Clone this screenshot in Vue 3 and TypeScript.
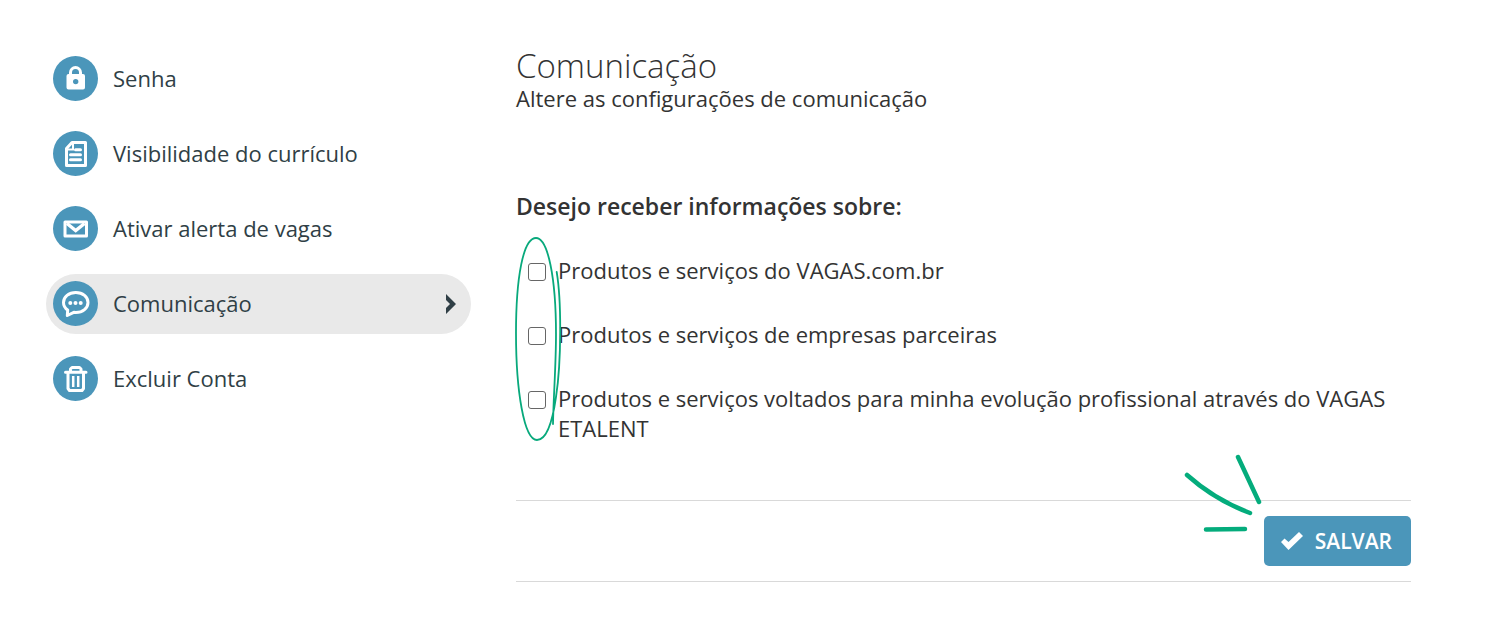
<script setup lang="ts">
import { ref } from 'vue'

interface MenuItem {
  id: string
  label: string
}

interface Option {
  id: string
  label: string
  checked: boolean
}

const menu: MenuItem[] = [
  { id: 'senha', label: 'Senha' },
  { id: 'visibilidade', label: 'Visibilidade do currículo' },
  { id: 'alerta', label: 'Ativar alerta de vagas' },
  { id: 'comunicacao', label: 'Comunicação' },
  { id: 'excluir', label: 'Excluir Conta' },
]

const active = ref('comunicacao')

const options = ref<Option[]>([
  { id: 'vagas', label: 'Produtos e serviços do VAGAS.com.br', checked: false },
  { id: 'parceiras', label: 'Produtos e serviços de empresas parceiras', checked: false },
  {
    id: 'etalent',
    label: 'Produtos e serviços voltados para minha evolução profissional através do VAGAS ETALENT',
    checked: false,
  },
])
</script>

<template>
  <div class="page">
    <nav class="menu" aria-label="Configurações">
      <a
        v-for="item in menu"
        :key="item.id"
        :href="'#' + item.id"
        class="menu-item"
        :class="{ active: item.id === active }"
        @click.prevent="active = item.id"
      >
        <svg class="menu-icon" viewBox="0 0 45 45" aria-hidden="true">
          <circle cx="22.5" cy="22.5" r="22.5" fill="#4b96ba" />
          <g v-if="item.id === 'senha'">
            <path d="M17.500 19v-2.500a5 5 0 0 1 10 0v2.500" fill="none" stroke="#fff" stroke-width="3" />
            <path
              fill="#fff"
              fill-rule="evenodd"
              d="M15.500 18h14.500a2 2 0 0 1 2 2v11.500a2 2 0 0 1-2 2h-14.500a2 2 0 0 1-2-2v-11.500a2 2 0 0 1 2-2zM22.700 22.900a2.700 2.700 0 1 0 0 5.400a2.700 2.700 0 0 0 0-5.400z"
            />
          </g>
          <g v-else-if="item.id === 'visibilidade'" fill="none" stroke="#fff">
            <path d="M19 11.500H32.500V34.500H13.500V17.500z" stroke-width="3" stroke-linejoin="round" />
            <path d="M20 11V18.500H13" stroke-width="2" />
            <path d="M22.500 18.800h5M17.500 23.800h10M17.500 28.800h10" stroke-width="3" stroke-linecap="round" />
          </g>
          <g v-else-if="item.id === 'alerta'" fill="none" stroke="#fff" stroke-width="3">
            <rect x="12" y="16" width="21.500" height="14" stroke-linejoin="round" />
            <path d="M14 17.500L22.700 24.500L31.500 17.500" stroke-width="3.500" />
          </g>
          <g v-else-if="item.id === 'comunicacao'">
            <path
              d="M22.800 11.500c-7 0-12.300 4.500-12.300 10c0 3.200 1.400 5.700 4.200 7.500l-.4 5.500l6.500-3.200c.7.100 1.300.2 2 .2c7 0 12.200-4.400 12.200-10S29.800 11.500 22.800 11.500z"
              fill="none"
              stroke="#fff"
              stroke-width="3"
              stroke-linejoin="round"
            />
            <g fill="#fff">
              <circle cx="17.300" cy="22" r="2" />
              <circle cx="22.500" cy="22" r="2" />
              <circle cx="27.700" cy="22" r="2" />
            </g>
          </g>
          <g v-else fill="none" stroke="#fff" stroke-width="3" stroke-linecap="round" stroke-linejoin="round">
            <path d="M12.500 16.200h20.500M17.500 15.500v-2.500l1.500-1.500h7.500l1.500 1.500v2.500" />
            <path d="M15 17v15.500l1.500 2h12.500l1.500-2v-15.500" />
            <path d="M20.200 20v11M25.200 20v11" stroke-width="2.500" stroke-linecap="butt" />
          </g>
        </svg>
        <span class="menu-label">{{ item.label }}</span>
        <svg v-if="item.id === active" class="chevron" viewBox="0 0 10 20" aria-hidden="true">
          <path d="M0 0L10 10L0 20V14L4 10L0 6z" fill="#303f46" />
        </svg>
      </a>
    </nav>

    <main class="content">
      <h1>Comunicação</h1>
      <p class="subtitle">Altere as configurações de comunicação</p>

      <form @submit.prevent>
        <fieldset>
          <legend>Desejo receber informações sobre:</legend>
          <div class="options">
            <div v-for="option in options" :key="option.id" class="option">
              <input :id="option.id" v-model="option.checked" type="checkbox" />
              <label :for="option.id">{{ option.label }}</label>
            </div>
            <svg class="loop" viewBox="0 0 50 206" aria-hidden="true">
              <path
                d="M41.700 36C46.500 65 46.500 125 41 161C37 189 31 204 22 204C9 204 1 155 1 97C1 42 8 2 21 2C33 2 41 42 41 98C41 130 38.500 160 38 188"
                fill="none"
                stroke="#08a97c"
                stroke-width="1.800"
                stroke-linecap="round"
              />
            </svg>
          </div>
        </fieldset>

        <div class="actions">
          <button type="submit">
            <svg class="check" viewBox="0 0 22 18" aria-hidden="true">
              <path d="M0 10L3.500 6.500L7.500 10L18 0L22 4L7.500 18z" fill="#fff" />
            </svg>
            <span>SALVAR</span>
          </button>
          <svg class="rays" viewBox="0 0 80 80" aria-hidden="true">
            <path
              d="M54 3L75 48M3 21Q31 46 66 59M22 75.500L61 75"
              fill="none"
              stroke="#04ac7c"
              stroke-width="4.500"
              stroke-linecap="round"
            />
          </svg>
        </div>
      </form>
    </main>
  </div>
</template>

<style>
body {
  margin: 0;
  background: #fff;
}
</style>

<style scoped>
.page {
  display: grid;
  grid-template-columns: 425px minmax(0, 1fr);
  column-gap: 45px;
  padding: 49px 75px 44px 46px;
  font-family: 'Open Sans', 'Noto Sans', sans-serif;
  font-size: 22px;
  font-weight: 400;
  line-height: 30px;
  color: #333;
}

.menu {
  display: flex;
  flex-direction: column;
  gap: 15px;
}

.menu-item {
  display: flex;
  align-items: center;
  gap: 15px;
  padding: 7px 15px 8px 7px;
  border-radius: 30px;
  color: #303f46;
  line-height: 31px;
  text-decoration: none;
}

.menu-item.active {
  background: #e9e9e9;
}

.menu-icon {
  flex: none;
  width: 45px;
  height: 45px;
}

.menu-label {
  flex: 1;
}

.chevron {
  flex: none;
  width: 10px;
  height: 20px;
}

h1 {
  margin: 0;
  font-size: 33px;
  font-weight: 300;
  line-height: 34px;
}

.subtitle {
  margin: 0 0 78px;
}

fieldset {
  margin: 0;
  padding: 0;
  border: 0;
  min-width: 0;
}

legend {
  padding: 0;
  font-size: 23px;
  font-weight: 600;
}

.options {
  position: relative;
  display: flex;
  flex-direction: column;
  gap: 34px;
  padding: 34px 0 57px;
}

.option {
  display: flex;
  align-items: flex-start;
  padding-left: 12px;
  gap: 12px;
}

.option input {
  appearance: none;
  flex: none;
  width: 18px;
  height: 18px;
  margin: 8px 0 0;
  border: 1px solid #666;
  border-radius: 3px;
  background: #fff;
}

.option input:checked {
  background: #4b96ba;
}

.loop {
  position: absolute;
  left: -1px;
  top: 15px;
  width: 50px;
  height: 206px;
  pointer-events: none;
}

.actions {
  position: relative;
  display: flex;
  justify-content: flex-end;
  padding: 15px 0;
  border-top: 1px solid #d9d9d9;
  border-bottom: 1px solid #d9d9d9;
}

button {
  display: flex;
  align-items: center;
  gap: 12px;
  height: 50px;
  padding: 0 19px 0 17px;
  border: 0;
  border-radius: 5px;
  background: #4b96ba;
  color: #fff;
  font-family: inherit;
  font-size: 21px;
  font-weight: 600;
  line-height: 30px;
  cursor: pointer;
}

.check {
  width: 22px;
  height: 18px;
}

.rays {
  position: absolute;
  right: 147px;
  top: -47px;
  width: 80px;
  height: 80px;
  pointer-events: none;
}
</style>
